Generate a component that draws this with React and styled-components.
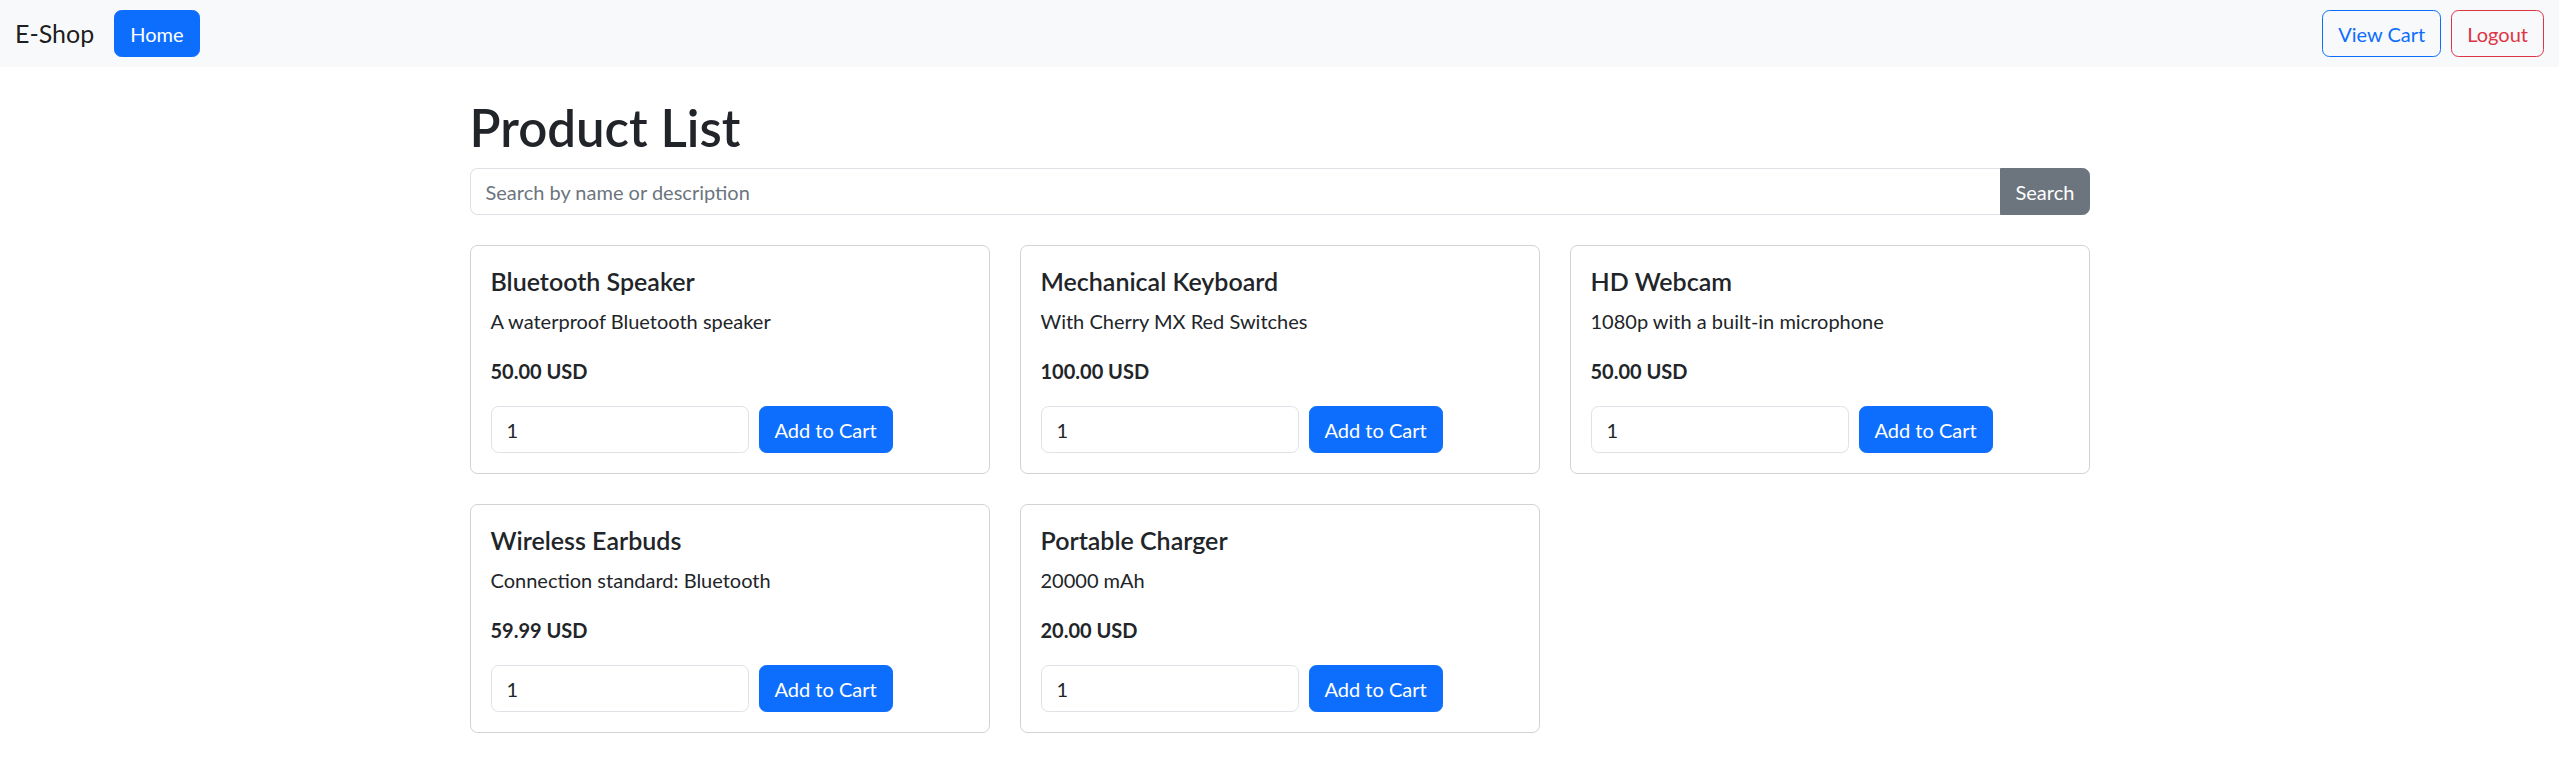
import React from "react";
import styled, { createGlobalStyle } from "styled-components";

const GlobalStyle = createGlobalStyle`
  * { box-sizing: border-box; }
  body {
    margin: 0;
    font-family: Lato, "Noto Sans", "Liberation Sans", sans-serif;
    font-size: 20px;
    line-height: 1.5;
    color: #212529;
    background: #fff;
  }
`;

const products = [
  { name: "Bluetooth Speaker", desc: "A waterproof Bluetooth speaker", price: "50.00 USD" },
  { name: "Mechanical Keyboard", desc: "With Cherry MX Red Switches", price: "100.00 USD" },
  { name: "HD Webcam", desc: "1080p with a built-in microphone", price: "50.00 USD" },
  { name: "Wireless Earbuds", desc: "Connection standard: Bluetooth", price: "59.99 USD" },
  { name: "Portable Charger", desc: "20000 mAh", price: "20.00 USD" },
];

const App = () => {
  return (
    <>
      <GlobalStyle />
      <Navbar>
        <NavLeft>
          <Brand>E-Shop</Brand>
          <Button variant="primary">Home</Button>
        </NavLeft>
        <NavRight>
          <Button variant="outline-primary">View Cart</Button>
          <Button variant="outline-danger">Logout</Button>
        </NavRight>
      </Navbar>
      <Container>
        <Titulo>Product List</Titulo>
        <SearchGroup>
          <SearchInput placeholder="Search by name or description" />
          <SearchButton>Search</SearchButton>
        </SearchGroup>
        <Grid>
          {products.map((p) => (
            <Card key={p.name}>
              <CardTitle>{p.name}</CardTitle>
              <CardText>{p.desc}</CardText>
              <Price>{p.price}</Price>
              <CartRow>
                <QtyInput type="number" defaultValue={1} min={1} />
                <Button variant="primary">Add to Cart</Button>
              </CartRow>
            </Card>
          ))}
        </Grid>
      </Container>
    </>
  );
};

const colors = {
  primary: { bg: "#0d6efd", color: "#fff", border: "#0d6efd" },
  "outline-primary": { bg: "transparent", color: "#0d6efd", border: "#0d6efd" },
  "outline-danger": { bg: "transparent", color: "#dc3545", border: "#dc3545" },
};

const Navbar = styled.nav`
  display: flex;
  align-items: center;
  justify-content: space-between;
  padding: 10px 15px;
  background: #f8f9fa;
`;

const NavLeft = styled.div`
  display: flex;
  align-items: center;
`;

const NavRight = styled.div`
  display: flex;
  align-items: center;
  gap: 10px;
`;

const Brand = styled.a`
  font-size: 25px;
  line-height: 1.5;
  margin-right: 20px;
  color: rgba(0, 0, 0, 0.9);
`;

const Button = styled.button`
  font-family: inherit;
  font-size: 20px;
  line-height: 30px;
  padding: 7.5px 15px;
  border-radius: 7.5px;
  border: 1px solid ${(p) => colors[p.variant].border};
  background: ${(p) => colors[p.variant].bg};
  color: ${(p) => colors[p.variant].color};
  white-space: nowrap;
`;

const Container = styled.main`
  width: 1620px;
  margin: 30px auto 0;
`;

const Titulo = styled.h1`
  font-size: 51px;
  font-weight: 600;
  line-height: 1.2;
  margin: 0 0 10px;
`;

const SearchGroup = styled.div`
  display: flex;
  margin-bottom: 20px;
`;

const SearchInput = styled.input`
  flex: 1;
  font-family: inherit;
  font-size: 20px;
  line-height: 30px;
  padding: 7.5px 15px;
  border: 1px solid #dee2e6;
  border-right: none;
  border-radius: 7.5px 0 0 7.5px;
  color: #212529;
  &::placeholder { color: #6c757d; }
`;

const SearchButton = styled.button`
  font-family: inherit;
  font-size: 20px;
  line-height: 30px;
  padding: 7.5px 15px;
  width: 90px;
  border: 1px solid #6c757d;
  border-radius: 0 7.5px 7.5px 0;
  background: #6c757d;
  color: #fff;
`;

const Grid = styled.div`
  display: grid;
  grid-template-columns: repeat(3, 1fr);
  column-gap: 30px;
  row-gap: 30px;
  padding-top: 10px;
`;

const Card = styled.div`
  border: 1px solid rgba(0, 0, 0, 0.175);
  border-radius: 7.5px;
  padding: 20px;
`;

const CardTitle = styled.h5`
  font-size: 25px;
  font-weight: 600;
  line-height: 1.2;
  margin: 0 0 10px;
`;

const CardText = styled.p`
  margin: 0 0 20px;
`;

const Price = styled.p`
  margin: 0 0 20px;
  font-weight: 700;
`;

const CartRow = styled.div`
  display: flex;
  gap: 10px;
`;

const QtyInput = styled.input`
  width: 258px;
  font-family: inherit;
  font-size: 20px;
  line-height: 30px;
  padding: 7.5px 15px;
  border: 1px solid #dee2e6;
  border-radius: 7.5px;
  color: #212529;
  -moz-appearance: textfield;
  &::-webkit-inner-spin-button, &::-webkit-outer-spin-button {
    -webkit-appearance: none;
    margin: 0;
  }
`;

export default App;
